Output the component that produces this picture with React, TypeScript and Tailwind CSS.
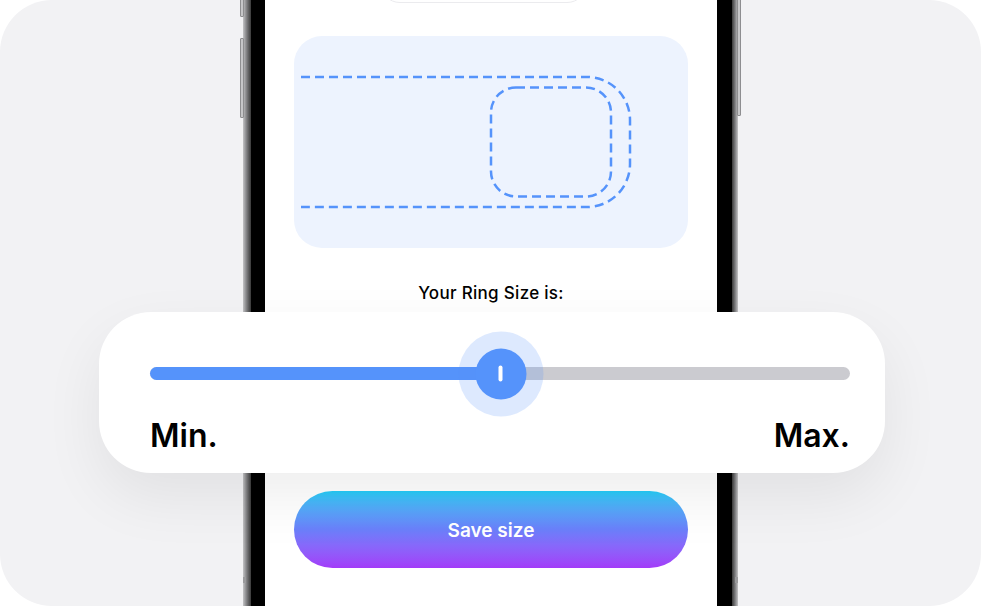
import React from 'react';

const font = { fontFamily: 'Inter, "Noto Sans", sans-serif' };

const RingGuide = () => (
  <svg
    className="absolute inset-0"
    width="394"
    height="212"
    viewBox="0 0 394 212"
    fill="none"
  >
    <path
      d="M7 41 H293 A43 43 0 0 1 336 84 V128 A43 43 0 0 1 293 171 H7"
      stroke="#5593fb"
      strokeWidth="2.5"
      strokeDasharray="9 5"
    />
    <rect
      x="197"
      y="51.5"
      width="120"
      height="109"
      rx="25"
      stroke="#5593fb"
      strokeWidth="2.5"
      strokeDasharray="9 5"
    />
  </svg>
);

const SizeSlider = ({ value }: { value: number }) => {
  return (
    <div className="absolute left-[99px] top-[312px] h-[161px] w-[786px] rounded-[52px] bg-white pl-[51px] pr-[35px] pt-[55px] shadow-[0_24px_60px_rgba(0,0,0,0.07)]">
      <div className="relative h-[13px] w-full rounded-full bg-[#cbcbd0]">
        <div
          className="h-full rounded-full bg-[#5593fb]"
          style={{ width: `${value}%` }}
        />
        <div
          className="absolute top-1/2 flex size-[85px] -translate-x-1/2 -translate-y-1/2 items-center justify-center rounded-full bg-[#5593fb]/20"
          style={{ left: `${value}%` }}
        >
          <div className="flex size-[51px] items-center justify-center rounded-full bg-[#5593fb]">
            <span className="h-[16px] w-[4px] rounded-full bg-white" />
          </div>
        </div>
      </div>

      <div className="mt-[36px] flex items-center justify-between text-[32px] font-semibold leading-[40px] text-black">
        <span>Min.</span>
        <span>Max.</span>
      </div>
    </div>
  );
};

export default function App() {
  return (
    <div className="relative h-[606px] w-[981px] overflow-hidden bg-white" style={font}>
      <div className="flex h-full rounded-[52px] bg-[#f2f2f4]">
        {/* phone */}
        <div className="relative ml-[243px] flex h-full w-[495px]">
          <span className="absolute -left-[3px] -top-[2px] h-[19px] w-[4px] rounded-[1px] border border-[#8e8e90] bg-[#c6c6c8]" />
          <span className="absolute -left-[3px] top-[38px] h-[80px] w-[4px] rounded-[1px] border border-[#8e8e90] bg-[#c6c6c8]" />
          <span className="absolute -right-[3px] -top-[2px] h-[118px] w-[4px] rounded-[1px] border border-[#8e8e90] bg-[#c6c6c8]" />
          <span className="absolute left-0 top-[577px] h-[6px] w-[3px] bg-[#9a9a9c]" />
          <span className="absolute right-0 top-[577px] h-[6px] w-[3px] bg-[#9a9a9c]" />

          <div className="h-full w-[8px] bg-linear-to-r from-[#c4c4c6] via-[#7a7a7c] to-[#3a3a3a]" />
          <div className="h-full w-[14px] bg-black" />

          <div className="flex h-full w-[452px] flex-col bg-white">
            <div className="-mt-[37px] ml-[115px] h-[40px] w-[207px] rounded-full border border-[#ebebee]" />

            <div className="relative mx-auto mt-[33px] h-[212px] w-[394px] rounded-[28px] bg-[#edf3fe]">
              <RingGuide />
            </div>

            <p className="mt-[33px] text-center text-[17px] font-medium leading-[24px] tracking-[0.3px] text-black">
              Your Ring Size is:
            </p>

            <button className="mx-auto mt-[186px] flex h-[77px] w-[394px] items-center justify-center rounded-full bg-linear-to-b from-[#22cbf7] via-[#6a80fb] to-[#a23af9] pt-[3px] text-[19px] font-semibold text-white">
              Save size
            </button>
          </div>

          <div className="h-full w-[15px] bg-black" />
          <div className="h-full w-[6px] bg-linear-to-r from-[#3a3a3a] via-[#7a7a7c] to-[#c4c4c6]" />
        </div>
      </div>

      <SizeSlider value={50.1} />
    </div>
  );
}
